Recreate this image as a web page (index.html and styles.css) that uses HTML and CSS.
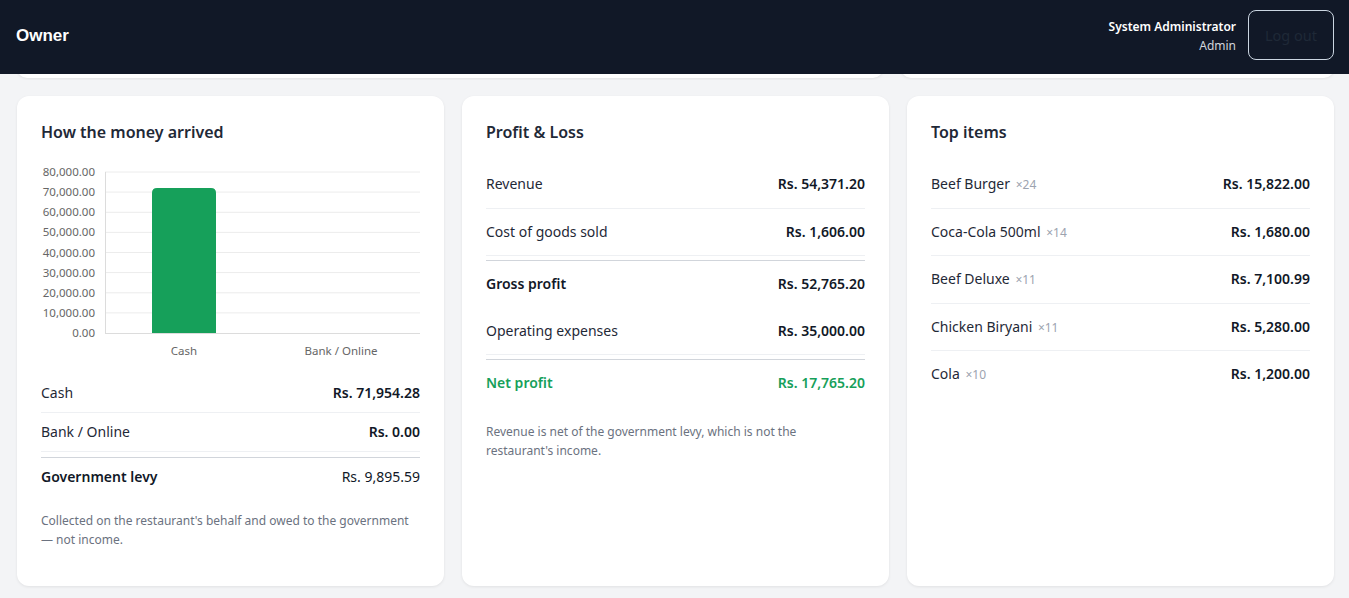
FILE: index.html
```html
<!DOCTYPE html>
<html lang="en">
<head>
  <meta charset="UTF-8" />
  <meta name="viewport" content="width=device-width, initial-scale=1.0" />
  <title>Owner - Dashboard</title>
  <link rel="stylesheet" href="styles.css">
</head>
<body>
  <header class="topbar">
    <div class="brand">Owner</div>
    <div class="user-area">
      <div class="user-info">
        <div class="user-name">System Administrator</div>
        <div class="user-role">Admin</div>
      </div>
      <button class="logout-btn">Log out</button>
    </div>
  </header>

  <main class="page">
    <!-- tail end of the summary row above -->
    <div class="prev-row">
      <div class="prev-card"></div>
      <div class="prev-card"></div>
    </div>

    <div class="grid">
      <section class="card">
        <h2>How the money arrived</h2>
        <svg class="chart" width="379" height="213" viewBox="0 0 379 213">
          <g class="grid-lines">
            <line x1="64" y1="11" x2="379" y2="11" />
            <line x1="64" y1="31.1" x2="379" y2="31.1" />
            <line x1="64" y1="51.3" x2="379" y2="51.3" />
            <line x1="64" y1="71.4" x2="379" y2="71.4" />
            <line x1="64" y1="91.5" x2="379" y2="91.5" />
            <line x1="64" y1="111.6" x2="379" y2="111.6" />
            <line x1="64" y1="131.8" x2="379" y2="131.8" />
            <line x1="64" y1="151.9" x2="379" y2="151.9" />
          </g>
          <g class="axis-lines">
            <line x1="64.5" y1="11" x2="64.5" y2="172" />
            <line x1="64" y1="172.5" x2="379" y2="172.5" />
          </g>
          <g class="y-labels">
            <text x="54" y="15">80,000.00</text>
            <text x="54" y="35.1">70,000.00</text>
            <text x="54" y="55.3">60,000.00</text>
            <text x="54" y="75.4">50,000.00</text>
            <text x="54" y="95.5">40,000.00</text>
            <text x="54" y="115.6">30,000.00</text>
            <text x="54" y="135.8">20,000.00</text>
            <text x="54" y="155.9">10,000.00</text>
            <text x="54" y="176">0.00</text>
          </g>
          <path class="bar" d="M111 172 V32 Q111 27 116 27 H170 Q175 27 175 32 V172 Z" />
          <g class="x-labels">
            <text x="143" y="194">Cash</text>
            <text x="300" y="194">Bank / Online</text>
          </g>
        </svg>
        <ul class="rows compact">
          <li><span>Cash</span><strong>Rs. 71,954.28</strong></li>
          <li><span>Bank / Online</span><strong>Rs. 0.00</strong></li>
          <li class="total"><strong>Government levy</strong><span class="plain">Rs. 9,895.59</span></li>
        </ul>
        <p class="note">Collected on the restaurant's behalf and owed to the government — not income.</p>
      </section>

      <section class="card">
        <h2>Profit &amp; Loss</h2>
        <ul class="rows">
          <li><span>Revenue</span><strong>Rs. 54,371.20</strong></li>
          <li><span>Cost of goods sold</span><strong>Rs. 1,606.00</strong></li>
          <li class="total"><strong>Gross profit</strong><strong>Rs. 52,765.20</strong></li>
          <li><span>Operating expenses</span><strong>Rs. 35,000.00</strong></li>
          <li class="total positive"><strong>Net profit</strong><strong>Rs. 17,765.20</strong></li>
        </ul>
        <p class="note">Revenue is net of the government levy, which is not the restaurant's income.</p>
      </section>

      <section class="card">
        <h2>Top items</h2>
        <ul class="rows items">
          <li><span>Beef Burger <small>×24</small></span><strong>Rs. 15,822.00</strong></li>
          <li><span>Coca-Cola 500ml <small>×14</small></span><strong>Rs. 1,680.00</strong></li>
          <li><span>Beef Deluxe <small>×11</small></span><strong>Rs. 7,100.99</strong></li>
          <li><span>Chicken Biryani <small>×11</small></span><strong>Rs. 5,280.00</strong></li>
          <li><span>Cola <small>×10</small></span><strong>Rs. 1,200.00</strong></li>
        </ul>
      </section>
    </div>
  </main>
</body>
</html>
```

FILE: styles.css
```css
* {
  box-sizing: border-box;
}

body {
  margin: 0;
  background: #f3f4f6;
  font-family: 'Noto Sans', 'Open Sans', sans-serif;
  color: #1f2937;
}

.topbar {
  height: 74px;
  background: #111827;
  color: #fff;
  display: flex;
  align-items: center;
  justify-content: space-between;
  padding: 10px 15px 14px 16px;
}

.brand {
  font-family: 'Liberation Sans', Arial, sans-serif;
  font-weight: 700;
  font-size: 17px;
  padding-top: 2px;
}

.user-area {
  display: flex;
  align-items: center;
  gap: 12px;
}

.user-info {
  text-align: right;
  font-size: 12px;
  line-height: 19px;
  padding-top: 2px;
}

.user-name {
  font-weight: 600;
}

.user-role {
  color: #d1d5db;
}

.logout-btn {
  width: 86px;
  height: 50px;
  background: transparent;
  border: 1px solid #cbd5e1;
  border-radius: 8px;
  color: #1f2937;
  font-family: inherit;
  font-size: 14.5px;
  cursor: pointer;
}

.page {
  padding: 0 15px 16px 17px;
}

.prev-row {
  display: grid;
  grid-template-columns: 2fr 1fr;
  gap: 18px;
  height: 6px;
  overflow: hidden;
  margin-bottom: 16px;
}

.prev-card {
  height: 20px;
  margin-top: -16px;
  background: #fff;
  border-radius: 12px;
  box-shadow: 0 1px 3px rgba(0, 0, 0, 0.08);
}

.grid {
  display: grid;
  grid-template-columns: repeat(3, 1fr);
  gap: 18px;
}

.card {
  background: #fff;
  border-radius: 12px;
  box-shadow: 0 1px 3px rgba(0, 0, 0, 0.08);
  padding: 24px 24px 37px;
}

.card h2 {
  margin: 0 0 16px;
  font-size: 16px;
  line-height: 25px;
  font-weight: 600;
  color: #1f2937;
}

.chart {
  display: block;
}

.chart .grid-lines line {
  stroke: #ececec;
  stroke-width: 1;
}

.chart .axis-lines line {
  stroke: #dcdcdc;
  stroke-width: 1;
}

.chart text {
  font-family: 'Noto Sans', sans-serif;
  font-size: 11.5px;
  fill: #666;
}

.chart .y-labels text {
  text-anchor: end;
}

.chart .x-labels text {
  text-anchor: middle;
}

.chart .bar {
  fill: #16a05a;
}

.rows {
  list-style: none;
  margin: 4px 0 0;
  padding: 0;
  font-size: 14px;
  line-height: 22px;
}

.rows li {
  display: flex;
  justify-content: space-between;
  align-items: center;
  padding: 12.25px 0;
  border-bottom: 1px solid #eef0f3;
}

.rows li.total {
  margin-top: 4px;
  border-top: 1px solid #d1d5db;
  border-bottom: none;
}

.rows li:last-child {
  border-bottom: none;
}

.rows strong {
  font-weight: 600;
  color: #111827;
}

.rows .plain {
  color: #111827;
}

.rows li.positive strong {
  color: #16a05a;
}

.rows.compact {
  margin-top: 0;
}

.rows.compact li {
  padding: 8px 0;
}

.rows.compact li.total {
  margin-top: 5px;
}

.rows small {
  font-size: 12px;
  line-height: 1;
  color: #9ca3af;
  margin-left: 2px;
}

.note {
  margin: 15px 0 0;
  font-size: 12px;
  line-height: 19px;
  color: #6b7280;
}
```
